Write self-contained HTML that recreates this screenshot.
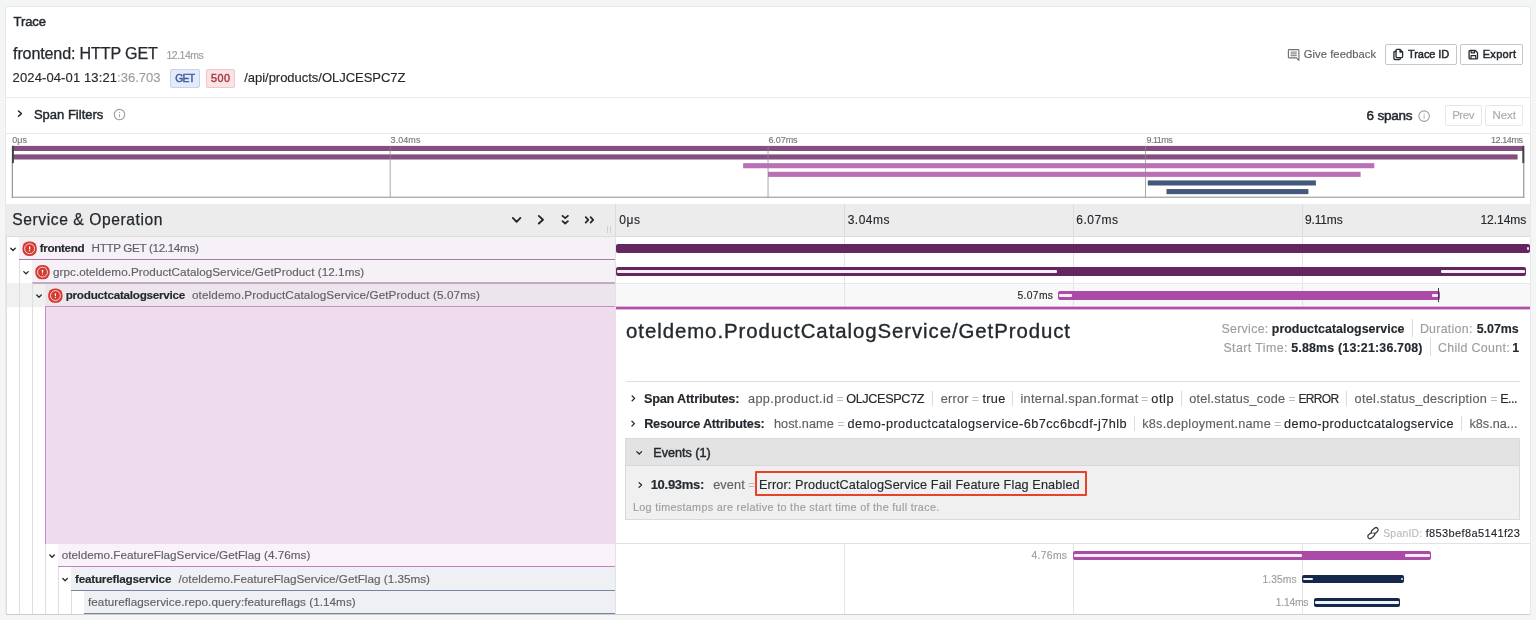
<!DOCTYPE html>
<html lang="en"><head><meta charset="utf-8"><title>Trace</title>
<style>
html,body{margin:0;padding:0;}
body{width:1536px;height:620px;overflow:hidden;background:#f4f5f5;position:relative;font-family:"Liberation Sans",Arial,sans-serif;color:#24292e;}
.a{position:absolute;display:block;}
.t{-webkit-text-stroke:0.15px currentColor;position:absolute;display:block;white-space:nowrap;line-height:1;font-family:"Liberation Sans",Arial,sans-serif;}
#panel{left:5px;top:6px;width:1524px;height:607px;background:#fff;border:1px solid #e7e8e9;border-radius:2px;}
.hl{background:#e9eaeb;height:1px;}
.vl{background:#e4e4e4;width:1px;}
.guide{background:#dedede;width:1px;}
.btn{border:1px solid #c4c6c8;border-radius:2px;background:#fff;box-sizing:border-box;}
.btn.dis{border-color:#e6e7e8;}
.badge{box-sizing:border-box;border-radius:2px;}
.bar{border-radius:2px;}
.hol{border-radius:1px;}
svg{position:absolute;display:block;overflow:visible;}
#texts{will-change:transform;}

</style></head>
<body>
<div class="a" id="panel"></div>

<!-- header dividers -->
<div class="a hl" style="left:6px;top:97px;width:1524px;"></div>
<div class="a hl" style="left:6px;top:133px;width:1524px;"></div>

<!-- method / status badges -->
<div class="a badge" style="left:170px;top:69px;width:30px;height:19px;background:#e3eaf8;border:1px solid #c3d3f2;"></div>
<div class="a badge" style="left:206px;top:69px;width:28.5px;height:19px;background:#f9e3e5;border:1px solid #f3c4c8;"></div>

<!-- header buttons -->
<div class="a btn" style="left:1385px;top:44px;width:72px;height:21px;"></div>
<div class="a btn" style="left:1460px;top:44px;width:63px;height:21px;"></div>
<div class="a btn dis" style="left:1445px;top:105px;width:37px;height:21px;"></div>
<div class="a btn dis" style="left:1485px;top:105px;width:38px;height:21px;"></div>

<!-- minimap -->
<div id="minimap">
<svg class="a" style="left:0;top:130px;" width="1536" height="72" viewBox="0 130 1536 72">
<rect x="12.3" y="145.9" width="1511.5" height="5.1" fill="#844e7e"/>
<rect x="12.3" y="154.4" width="1505.3" height="5.1" fill="#844e7e"/>
<rect x="743.1" y="163.15" width="631.2" height="5.1" fill="#bb6fb7"/>
<rect x="768.0" y="171.8" width="592.6" height="5.1" fill="#bb6fb7"/>
<rect x="1147.8" y="180.4" width="168.1" height="5.1" fill="#43597b"/>
<rect x="1166.5" y="189.05" width="141.9" height="5.1" fill="#43597b"/>
<rect x="389.70" y="145.9" width="1" height="51.3" fill="#8c8c8c" fill-opacity="0.75"/>
<rect x="767.55" y="145.9" width="1" height="51.3" fill="#8c8c8c" fill-opacity="0.75"/>
<rect x="1145.00" y="145.9" width="1" height="51.3" fill="#8c8c8c" fill-opacity="0.75"/>
<rect x="11.8" y="145.9" width="1" height="51.8" fill="#808080"/>
<rect x="1523.3" y="145.9" width="1" height="51.8" fill="#808080"/>
<rect x="11.8" y="196.7" width="1512.5" height="1" fill="#8e8e8e"/>
<rect x="12.0" y="145.9" width="1.9" height="17.2" fill="#444"/>
<rect x="1522.3" y="145.9" width="1.9" height="17.2" fill="#444"/>
</svg>
</div>

<!-- timeline header -->
<div class="a" style="left:6px;top:204px;width:1524px;height:33px;background:#ececec;"></div>
<div class="a" style="left:6px;top:236px;width:1524px;height:1px;background:#dddddd;"></div>
<div class="a" style="left:615px;top:204px;width:1px;height:33px;background:#dcdcdc;"></div>
<div class="a" style="left:844px;top:204px;width:1px;height:33px;background:#dcdcdc;"></div>
<div class="a" style="left:1073px;top:204px;width:1px;height:33px;background:#dcdcdc;"></div>
<div class="a" style="left:1302px;top:204px;width:1px;height:33px;background:#dcdcdc;"></div>
<div class="a" style="left:607px;top:225.5px;width:1px;height:7.5px;background:#d0d0d0;"></div>
<div class="a" style="left:610px;top:225.5px;width:1px;height:7.5px;background:#d0d0d0;"></div>

<!-- row backgrounds: timeline side -->
<div class="a" style="left:6px;top:283px;width:1524px;height:24px;background:#f0f0f0;"></div>
<div class="a" style="left:616px;top:283px;width:914px;height:24px;background:#f8f8f8;"></div>
<div class="a" style="left:616px;top:283px;width:914px;height:1px;background:#e8e8e8;"></div>
<!-- tick lines through rows -->
<div class="a vl" style="left:844px;top:237px;width:1px;height:70px;"></div>
<div class="a vl" style="left:1073px;top:237px;width:1px;height:70px;"></div>
<div class="a vl" style="left:1302px;top:237px;width:1px;height:70px;"></div>
<div class="a vl" style="left:844px;top:544px;width:1px;height:70px;"></div>
<div class="a vl" style="left:1073px;top:544px;width:1px;height:70px;"></div>
<div class="a vl" style="left:1302px;top:544px;width:1px;height:70px;"></div>

<!-- name column rows -->
<div class="a" style="left:19px;top:237px;width:596px;height:22px;background:#f6f1f6;border-bottom:1px solid #a57da2;"></div>
<div class="a" style="left:32px;top:260px;width:583px;height:23px;background:#f6f1f6;"></div>
<div class="a" style="left:45px;top:283px;width:570px;height:23px;background:#ece6ec;border-bottom:1px solid #c88cc5;"></div>
<div class="a" style="left:32px;top:282px;width:583px;height:2px;background:rgba(160,112,157,0.55);"></div>
<div class="a" style="left:45px;top:307px;width:569px;height:237px;background:#eedcee;border-left:1px solid #c88cc5;"></div>
<div class="a" style="left:58px;top:544px;width:557px;height:22px;background:#faf2f9;border-bottom:1px solid #c57fc2;"></div>
<div class="a" style="left:71px;top:567px;width:544px;height:23px;background:#eef0f3;border-bottom:1px solid #7385a1;"></div>
<div class="a" style="left:84px;top:591px;width:531px;height:22px;background:#eef0f3;border-bottom:1px solid #7385a1;"></div>

<!-- indent guides -->
<div class="a" style="left:615px;top:237px;width:1px;height:377px;background:#e3e3e3;"></div>
<div class="a" style="left:6px;top:237px;width:1px;height:377px;background:#dedede;"></div>
<div class="a guide" style="left:19px;top:260px;height:354px;"></div>
<div class="a guide" style="left:32px;top:283px;height:331px;"></div>
<div class="a guide" style="left:45px;top:544px;height:70px;"></div>
<div class="a guide" style="left:58px;top:567px;height:47px;"></div>
<div class="a guide" style="left:71px;top:591px;height:23px;"></div>

<!-- detail pane -->
<div class="a" style="left:616px;top:307px;width:914px;height:237px;background:#fff;"></div>
<div class="a" style="left:616px;top:306px;width:914px;height:1px;background:rgba(176,79,171,0.35);"></div>
<div class="a" style="left:616px;top:307px;width:914px;height:2px;background:#b04fab;"></div>
<div class="a" style="left:616px;top:309px;width:914px;height:1px;background:rgba(176,79,171,0.4);"></div>
<div class="a" style="left:616px;top:543px;width:914px;height:1px;background:#e2e2e2;"></div>
<div class="a" style="left:626px;top:381px;width:894px;height:1px;background:#dedede;"></div>
<!-- attr separators -->
<div class="a" style="left:1412px;top:319px;width:1px;height:18px;background:#dcdcdc;"></div>
<div class="a" style="left:1430px;top:338px;width:1px;height:18px;background:#dcdcdc;"></div>
<div class="a" style="left:932px;top:391px;width:1px;height:15px;background:#dcdcdc;"></div>
<div class="a" style="left:1012px;top:391px;width:1px;height:15px;background:#dcdcdc;"></div>
<div class="a" style="left:1181px;top:391px;width:1px;height:15px;background:#dcdcdc;"></div>
<div class="a" style="left:1346px;top:391px;width:1px;height:15px;background:#dcdcdc;"></div>
<div class="a" style="left:1134px;top:416px;width:1px;height:15px;background:#dcdcdc;"></div>
<div class="a" style="left:1461px;top:416px;width:1px;height:15px;background:#dcdcdc;"></div>
<!-- events box -->
<div class="a" style="left:625px;top:438px;width:895px;height:82px;background:#f0f0f0;border:1px solid #dadada;box-sizing:border-box;"></div>
<div class="a" style="left:626px;top:439px;width:893px;height:26.5px;background:#e3e3e3;"></div>
<div class="a" style="left:626px;top:465px;width:893px;height:1px;background:#d8d8d8;"></div>
<div class="a" style="left:755px;top:471px;width:332px;height:25px;border:2px solid #e8432a;box-sizing:border-box;border-radius:1px;"></div>

<!-- span bars -->
<div id="bars">
<div class="a bar" style="left:616px;top:244px;width:914px;height:8.7px;background:#64265e;"></div>
<div class="a hol" style="left:1526.8px;top:247px;width:2.4px;height:2.8px;background:#f4ecf3;"></div>

<div class="a bar" style="left:616px;top:267.4px;width:910.4px;height:8.6px;background:#64265e;"></div>
<div class="a hol" style="left:617px;top:270.4px;width:440.3px;height:2.8px;background:#f6eff5;"></div>
<div class="a hol" style="left:1440.5px;top:270.4px;width:84.8px;height:2.8px;background:#f6eff5;"></div>

<div class="a bar" style="left:1058px;top:291px;width:381.6px;height:8.6px;background:#ac4ba7;"></div>
<div class="a hol" style="left:1059.2px;top:293.9px;width:13px;height:2.8px;background:#f6ebf5;"></div>
<div class="a hol" style="left:1431.6px;top:293.9px;width:6.6px;height:2.8px;background:#f6ebf5;"></div>
<div class="a" style="left:1438.4px;top:288.2px;width:1px;height:13.7px;background:#3c3c3c;"></div>

<div class="a bar" style="left:1072.8px;top:551.1px;width:358.4px;height:8.7px;background:#ac4ba7;"></div>
<div class="a hol" style="left:1074px;top:554px;width:227.8px;height:2.8px;background:#f6ebf5;"></div>
<div class="a hol" style="left:1404.6px;top:554px;width:25.6px;height:2.8px;background:#f6ebf5;"></div>

<div class="a bar" style="left:1301.8px;top:574.6px;width:102.4px;height:8.8px;background:#14284b;"></div>
<div class="a hol" style="left:1303px;top:577.6px;width:10px;height:2.8px;background:#f0f2f6;"></div>
<div class="a hol" style="left:1400.6px;top:577.6px;width:2.4px;height:2.8px;background:#f0f2f6;"></div>

<div class="a bar" style="left:1313.7px;top:598.1px;width:86.2px;height:8.6px;background:#14284b;"></div>
<div class="a hol" style="left:1315px;top:601px;width:83.6px;height:2.8px;background:#f0f2f6;"></div>
</div>

<div class="a" style="left:6px;top:614px;width:1524px;height:1px;background:#cccccc;"></div>
<div id="icons"><svg class="a" style="left:0;top:0;" width="1536" height="620" viewBox="0 0 1536 620">
<path d="M10.75,248.30 L13.00,250.50 L15.25,248.30" fill="none" stroke="#24292e" stroke-width="1.3" stroke-linecap="round" stroke-linejoin="round"/>
<path d="M23.75,271.60 L26.00,273.80 L28.25,271.60" fill="none" stroke="#24292e" stroke-width="1.3" stroke-linecap="round" stroke-linejoin="round"/>
<path d="M36.75,295.00 L39.00,297.20 L41.25,295.00" fill="none" stroke="#24292e" stroke-width="1.3" stroke-linecap="round" stroke-linejoin="round"/>
<path d="M49.85,555.00 L52.10,557.20 L54.35,555.00" fill="none" stroke="#24292e" stroke-width="1.3" stroke-linecap="round" stroke-linejoin="round"/>
<path d="M62.85,578.50 L65.10,580.70 L67.35,578.50" fill="none" stroke="#24292e" stroke-width="1.3" stroke-linecap="round" stroke-linejoin="round"/>
<g transform="translate(29.6,248.7)"><rect x="-7.2" y="-7.2" width="14.4" height="14.4" rx="6.4" fill="#d23a33"/><circle r="4.95" fill="none" stroke="#fff" stroke-width="0.9" opacity="0.88"/><rect x="-0.6" y="-2.4" width="1.2" height="3.1" rx="0.5" fill="#fff"/><circle cy="1.95" r="0.65" fill="#fff"/></g>
<g transform="translate(42.5,272.1)"><rect x="-7.2" y="-7.2" width="14.4" height="14.4" rx="6.4" fill="#d23a33"/><circle r="4.95" fill="none" stroke="#fff" stroke-width="0.9" opacity="0.88"/><rect x="-0.6" y="-2.4" width="1.2" height="3.1" rx="0.5" fill="#fff"/><circle cy="1.95" r="0.65" fill="#fff"/></g>
<g transform="translate(55.4,295.6)"><rect x="-7.2" y="-7.2" width="14.4" height="14.4" rx="6.4" fill="#d23a33"/><circle r="4.95" fill="none" stroke="#fff" stroke-width="0.9" opacity="0.88"/><rect x="-0.6" y="-2.4" width="1.2" height="3.1" rx="0.5" fill="#fff"/><circle cy="1.95" r="0.65" fill="#fff"/></g>
<path d="M512.80,217.90 L516.60,221.90 L520.40,217.90" fill="none" stroke="#24292e" stroke-width="1.9" stroke-linecap="round" stroke-linejoin="round"/>
<path d="M538.80,215.90 L543.00,219.70 L538.80,223.50" fill="none" stroke="#24292e" stroke-width="1.9" stroke-linecap="round" stroke-linejoin="round"/>
<path d="M562.50,215.80 L565.20,218.20 L567.90,215.80" fill="none" stroke="#24292e" stroke-width="1.8" stroke-linecap="round" stroke-linejoin="round"/>
<path d="M562.50,221.10 L565.20,223.50 L567.90,221.10" fill="none" stroke="#24292e" stroke-width="1.8" stroke-linecap="round" stroke-linejoin="round"/>
<path d="M585.70,217.15 L588.30,219.85 L585.70,222.55" fill="none" stroke="#24292e" stroke-width="1.8" stroke-linecap="round" stroke-linejoin="round"/>
<path d="M590.60,217.15 L593.20,219.85 L590.60,222.55" fill="none" stroke="#24292e" stroke-width="1.8" stroke-linecap="round" stroke-linejoin="round"/>
<path d="M18.50,111.00 L21.40,113.60 L18.50,116.20" fill="none" stroke="#24292e" stroke-width="1.5" stroke-linecap="round" stroke-linejoin="round"/>
<g transform="translate(119.5,114.6)"><circle r="5.2" fill="none" stroke="#9c9ea0" stroke-width="1.1"/><circle cy="-2.1" r="0.6" fill="#9c9ea0"/><rect x="-0.45" y="-0.8" width="0.9" height="3.5" rx="0.4" fill="#9c9ea0"/></g>
<g transform="translate(1424.1,116.1)"><circle r="5.25" fill="none" stroke="#9c9ea0" stroke-width="1.1"/><circle cy="-2.1" r="0.6" fill="#9c9ea0"/><rect x="-0.45" y="-0.8" width="0.9" height="3.5" rx="0.4" fill="#9c9ea0"/></g>
<path d="M632.15,396.00 L634.65,398.40 L632.15,400.80" fill="none" stroke="#24292e" stroke-width="1.3" stroke-linecap="round" stroke-linejoin="round"/>
<path d="M631.95,421.20 L634.45,423.60 L631.95,426.00" fill="none" stroke="#24292e" stroke-width="1.3" stroke-linecap="round" stroke-linejoin="round"/>
<path d="M636.80,451.60 L639.20,454.00 L641.60,451.60" fill="none" stroke="#24292e" stroke-width="1.3" stroke-linecap="round" stroke-linejoin="round"/>
<path d="M639.05,482.60 L641.55,485.00 L639.05,487.40" fill="none" stroke="#24292e" stroke-width="1.3" stroke-linecap="round" stroke-linejoin="round"/>
<path d="M1288.4,50.5 a0.9,0.9 0 0 1 0.9,-0.9 h8.7 a0.9,0.9 0 0 1 0.9,0.9 v9.8 l-2.4,-2.4 h-7.2 a0.9,0.9 0 0 1 -0.9,-0.9 z" fill="none" stroke="#6c6f73" stroke-width="1.15" stroke-linejoin="round"/><path d="M1290.6,52.1 h6.2 M1290.6,53.9 h6.2 M1290.6,55.7 h6.2" fill="none" stroke="#6c6f73" stroke-width="0.95"/>
<path d="M1396.0,50.4 a1,1 0 0 1 1,-1 h3.0 l2.6,2.6 v4.6 a1,1 0 0 1 -1,1 h-4.6 a1,1 0 0 1 -1,-1 z M1400.0,49.4 v2.6 h2.6" fill="none" stroke="#24292e" stroke-width="1.3" stroke-linejoin="round"/><path d="M1396.0,51.5 h-1.1 a1,1 0 0 0 -1,1 v6.0 a1,1 0 0 0 1,1 h4.4 a1,1 0 0 0 1,-1 v-0.9" fill="none" stroke="#24292e" stroke-width="1.3" stroke-linejoin="round" stroke-linecap="round"/>
<path d="M1469.1,51.5 a1,1 0 0 1 1,-1 h5.2 l2.2,2.2 v5.2 a1,1 0 0 1 -1,1 h-6.4 a1,1 0 0 1 -1,-1 z" fill="none" stroke="#24292e" stroke-width="1.3" stroke-linejoin="round"/><path d="M1471.2,50.6 v2.3 h3.3 v-2.3 M1471.0,58.8 v-3.2 h4.7 v3.2" fill="none" stroke="#24292e" stroke-width="1.15" stroke-linejoin="round"/>
<g transform="translate(1373,533.15) rotate(-41)" fill="none" stroke="#3a3f44" stroke-width="1.3" stroke-linecap="round"><path d="M-1.5,-1.65 H-4.4 A2.2,2.2 0 0 0 -4.4,2.75 H-1.3 A2.2,2.2 0 0 0 0.9,0.55"/><path d="M1.5,1.65 H4.4 A2.2,2.2 0 0 0 4.4,-2.75 H1.3 A2.2,2.2 0 0 0 -0.9,-0.55"/></g>
</svg></div>

<div id="texts">
<span class="t" id="t0" style="left:13.50px;top:15.00px;font-size:13px;color:#24292e;letter-spacing:-0.062px;-webkit-text-stroke:0.45px currentColor;">Trace</span>
<span class="t" id="t1" style="left:13.10px;top:45.00px;font-size:16.1px;color:#24292e;letter-spacing:-0.152px;-webkit-text-stroke:0.25px currentColor;">frontend: HTTP GET</span>
<span class="t" id="t2" style="left:166.50px;top:50.00px;font-size:10.5px;color:#9b9da0;letter-spacing:-0.514px;">12.14ms</span>
<span class="t" id="t3" style="left:12.60px;top:71.00px;font-size:13px;color:#24292e;letter-spacing:0.116px;">2024-04-01 13:21</span>
<span class="t" id="t4" style="left:117.00px;top:71.00px;font-size:13px;color:#9b9da0;letter-spacing:0.021px;">:36.703</span>
<span class="t" id="t5" style="left:175.20px;top:74.00px;font-size:10.4px;color:#3d5c9e;letter-spacing:-0.688px;-webkit-text-stroke:0.45px currentColor;">GET</span>
<span class="t" id="t6" style="left:210.90px;top:73.00px;font-size:10.8px;color:#a83a42;letter-spacing:0.542px;-webkit-text-stroke:0.45px currentColor;">500</span>
<span class="t" id="t7" style="left:244.20px;top:71.00px;font-size:13px;color:#24292e;letter-spacing:-0.024px;">/api/products/OLJCESPC7Z</span>
<span class="t" id="t8" style="left:1303.80px;top:49.00px;font-size:11.2px;color:#5e6165;letter-spacing:0.056px;">Give feedback</span>
<span class="t" id="t9" style="left:1408.00px;top:49.00px;font-size:11px;color:#24292e;letter-spacing:-0.067px;-webkit-text-stroke:0.45px currentColor;">Trace ID</span>
<span class="t" id="t10" style="left:1482.70px;top:49.00px;font-size:11px;color:#24292e;letter-spacing:0.301px;-webkit-text-stroke:0.45px currentColor;">Export</span>
<span class="t" id="t11" style="left:33.90px;top:108.00px;font-size:13px;color:#24292e;letter-spacing:0.011px;-webkit-text-stroke:0.45px currentColor;">Span Filters</span>
<span class="t" id="t12" style="left:1366.60px;top:109.00px;font-size:13.5px;color:#24292e;letter-spacing:-0.233px;-webkit-text-stroke:0.5px currentColor;">6 spans</span>
<span class="t" id="t13" style="left:1452.20px;top:110.00px;font-size:11.5px;color:#a9abad;letter-spacing:-0.485px;">Prev</span>
<span class="t" id="t14" style="left:1492.50px;top:110.00px;font-size:11.5px;color:#a9abad;letter-spacing:-0.052px;">Next</span>
<span class="t" id="t15" style="left:12.30px;top:136.00px;font-size:9px;color:#76787b;letter-spacing:0.048px;">0μs</span>
<span class="t" id="t16" style="left:390.60px;top:136.00px;font-size:9px;color:#76787b;letter-spacing:0.057px;">3.04ms</span>
<span class="t" id="t17" style="left:768.40px;top:136.00px;font-size:9px;color:#76787b;letter-spacing:-0.063px;">6.07ms</span>
<span class="t" id="t18" style="left:1146.50px;top:136.00px;font-size:9px;color:#76787b;letter-spacing:-0.512px;">9.11ms</span>
<span class="t" id="t19" style="left:1491.00px;top:136.00px;font-size:9px;color:#76787b;letter-spacing:-0.422px;">12.14ms</span>
<span class="t" id="t20" style="left:12.30px;top:212.00px;font-size:15.6px;color:#24292e;letter-spacing:0.592px;-webkit-text-stroke:0.25px currentColor;">Service &amp; Operation</span>
<span class="t" id="t21" style="left:619.30px;top:214.00px;font-size:12px;color:#24292e;letter-spacing:0.553px;">0μs</span>
<span class="t" id="t22" style="left:847.70px;top:214.00px;font-size:12px;color:#24292e;letter-spacing:0.488px;">3.04ms</span>
<span class="t" id="t23" style="left:1076.30px;top:214.00px;font-size:12px;color:#24292e;letter-spacing:0.468px;">6.07ms</span>
<span class="t" id="t24" style="left:1305.00px;top:214.00px;font-size:12px;color:#24292e;letter-spacing:-0.154px;">9.11ms</span>
<span class="t" id="t25" style="left:1480.40px;top:214.00px;font-size:12px;color:#24292e;letter-spacing:-0.022px;">12.14ms</span>
<span class="t" id="t26" style="left:39.80px;top:242.00px;font-size:11.7px;color:#24292e;font-weight:700;letter-spacing:-0.370px;">frontend</span>
<span class="t" id="t27" style="left:91.60px;top:242.00px;font-size:11.7px;color:#5e6165;letter-spacing:-0.355px;">HTTP GET (12.14ms)</span>
<span class="t" id="t28" style="left:53.00px;top:266.00px;font-size:11.7px;color:#5e6165;letter-spacing:0.049px;">grpc.oteldemo.ProductCatalogService/GetProduct (12.1ms)</span>
<span class="t" id="t29" style="left:65.70px;top:289.00px;font-size:11.7px;color:#24292e;font-weight:700;letter-spacing:-0.256px;">productcatalogservice</span>
<span class="t" id="t30" style="left:192.00px;top:289.00px;font-size:11.7px;color:#5e6165;letter-spacing:0.108px;">oteldemo.ProductCatalogService/GetProduct (5.07ms)</span>
<span class="t" id="t31" style="left:61.70px;top:549.00px;font-size:11.7px;color:#5e6165;letter-spacing:0.028px;">oteldemo.FeatureFlagService/GetFlag (4.76ms)</span>
<span class="t" id="t32" style="left:75.00px;top:573.00px;font-size:11.7px;color:#24292e;font-weight:700;letter-spacing:-0.215px;">featureflagservice</span>
<span class="t" id="t33" style="left:178.60px;top:573.00px;font-size:11.7px;color:#5e6165;letter-spacing:0.015px;">/oteldemo.FeatureFlagService/GetFlag (1.35ms)</span>
<span class="t" id="t34" style="left:88.00px;top:596.00px;font-size:11.7px;color:#5e6165;letter-spacing:0.053px;">featureflagservice.repo.query:featureflags (1.14ms)</span>
<span class="t" id="t35" style="left:1017.50px;top:291.00px;font-size:10.3px;color:#24292e;letter-spacing:0.344px;">5.07ms</span>
<span class="t" id="t36" style="left:1031.40px;top:551.00px;font-size:10.3px;color:#9b9da0;letter-spacing:0.364px;">4.76ms</span>
<span class="t" id="t37" style="left:1262.40px;top:575.00px;font-size:10.3px;color:#9b9da0;letter-spacing:0.084px;">1.35ms</span>
<span class="t" id="t38" style="left:1275.70px;top:598.00px;font-size:10.3px;color:#9b9da0;letter-spacing:-0.196px;">1.14ms</span>
<span class="t" id="t39" style="left:626.10px;top:321.00px;font-size:20.4px;color:#24292e;letter-spacing:0.925px;-webkit-text-stroke:0.35px currentColor;">oteldemo.ProductCatalogService/GetProduct</span>
<span class="t" id="t40" style="left:1221.40px;top:323.00px;font-size:12.4px;color:#9b9da0;letter-spacing:0.305px;">Service:</span>
<span class="t" id="t41" style="left:1271.80px;top:323.00px;font-size:12.4px;color:#24292e;font-weight:700;letter-spacing:0.024px;">productcatalogservice</span>
<span class="t" id="t42" style="left:1419.90px;top:323.00px;font-size:12.4px;color:#9b9da0;letter-spacing:0.277px;">Duration:</span>
<span class="t" id="t43" style="left:1476.70px;top:323.00px;font-size:12.4px;color:#24292e;font-weight:700;letter-spacing:-0.006px;">5.07ms</span>
<span class="t" id="t44" style="left:1223.40px;top:342.00px;font-size:12.4px;color:#9b9da0;letter-spacing:0.419px;">Start Time:</span>
<span class="t" id="t45" style="left:1291.20px;top:342.00px;font-size:12.4px;color:#24292e;font-weight:700;letter-spacing:0.193px;">5.88ms (13:21:36.708)</span>
<span class="t" id="t46" style="left:1438.00px;top:342.00px;font-size:12.4px;color:#9b9da0;letter-spacing:0.310px;">Child Count:</span>
<span class="t" id="t47" style="left:1512.20px;top:342.00px;font-size:12.4px;color:#24292e;font-weight:700;">1</span>
<span class="t" id="t48" style="left:643.90px;top:393.00px;font-size:12.7px;color:#24292e;font-weight:700;letter-spacing:-0.181px;">Span Attributes:</span>
<span class="t" id="t49" style="left:748.00px;top:393.00px;font-size:12.7px;color:#5e6165;letter-spacing:0.368px;">app.product.id</span>
<span class="t" id="t50" style="left:836.60px;top:394.00px;font-size:11.5px;color:#b9bbbd;">=</span>
<span class="t" id="t51" style="left:846.20px;top:393.00px;font-size:12.7px;color:#24292e;letter-spacing:-0.377px;">OLJCESPC7Z</span>
<span class="t" id="t52" style="left:940.70px;top:393.00px;font-size:12.7px;color:#5e6165;letter-spacing:0.251px;">error</span>
<span class="t" id="t53" style="left:972.00px;top:394.00px;font-size:11.5px;color:#b9bbbd;">=</span>
<span class="t" id="t54" style="left:982.40px;top:393.00px;font-size:12.7px;color:#24292e;letter-spacing:0.342px;">true</span>
<span class="t" id="t55" style="left:1020.50px;top:393.00px;font-size:12.7px;color:#5e6165;letter-spacing:0.293px;">internal.span.format</span>
<span class="t" id="t56" style="left:1141.30px;top:394.00px;font-size:11.5px;color:#b9bbbd;">=</span>
<span class="t" id="t57" style="left:1151.20px;top:393.00px;font-size:12.7px;color:#24292e;letter-spacing:0.677px;">otlp</span>
<span class="t" id="t58" style="left:1189.20px;top:393.00px;font-size:12.7px;color:#5e6165;letter-spacing:0.233px;">otel.status_code</span>
<span class="t" id="t59" style="left:1288.60px;top:394.00px;font-size:11.5px;color:#b9bbbd;">=</span>
<span class="t" id="t60" style="left:1298.50px;top:393.00px;font-size:12.0px;color:#24292e;letter-spacing:-0.686px;">ERROR</span>
<span class="t" id="t61" style="left:1354.60px;top:393.00px;font-size:12.7px;color:#5e6165;letter-spacing:0.270px;">otel.status_description</span>
<span class="t" id="t62" style="left:1490.40px;top:394.00px;font-size:11.5px;color:#b9bbbd;">=</span>
<span class="t" id="t63" style="left:1500.20px;top:393.00px;font-size:12.7px;color:#24292e;letter-spacing:-0.582px;">E...</span>
<span class="t" id="t64" style="left:644.20px;top:418.00px;font-size:12.7px;color:#24292e;font-weight:700;letter-spacing:-0.238px;">Resource Attributes:</span>
<span class="t" id="t65" style="left:773.90px;top:418.00px;font-size:12.7px;color:#5e6165;letter-spacing:0.081px;">host.name</span>
<span class="t" id="t66" style="left:837.60px;top:419.00px;font-size:11.5px;color:#b9bbbd;">=</span>
<span class="t" id="t67" style="left:847.60px;top:418.00px;font-size:12.7px;color:#24292e;letter-spacing:0.464px;">demo-productcatalogservice-6b7cc6bcdf-j7hlb</span>
<span class="t" id="t68" style="left:1142.20px;top:418.00px;font-size:12.7px;color:#5e6165;letter-spacing:0.243px;">k8s.deployment.name</span>
<span class="t" id="t69" style="left:1274.20px;top:419.00px;font-size:11.5px;color:#b9bbbd;">=</span>
<span class="t" id="t70" style="left:1284.00px;top:418.00px;font-size:12.7px;color:#24292e;letter-spacing:0.404px;">demo-productcatalogservice</span>
<span class="t" id="t71" style="left:1469.40px;top:418.00px;font-size:12.7px;color:#5e6165;letter-spacing:0.016px;">k8s.na...</span>
<span class="t" id="t72" style="left:653.30px;top:447.00px;font-size:12.6px;color:#24292e;letter-spacing:-0.012px;-webkit-text-stroke:0.45px currentColor;">Events (1)</span>
<span class="t" id="t73" style="left:650.70px;top:478.00px;font-size:13px;color:#24292e;font-weight:700;letter-spacing:-0.294px;">10.93ms:</span>
<span class="t" id="t74" style="left:713.20px;top:479.00px;font-size:12.7px;color:#5e6165;letter-spacing:0.113px;">event</span>
<span class="t" id="t75" style="left:748.30px;top:480.00px;font-size:11px;color:#b9bbbd;">=</span>
<span class="t" id="t76" style="left:759.00px;top:479.00px;font-size:12.7px;color:#24292e;letter-spacing:0.115px;">Error: ProductCatalogService Fail Feature Flag Enabled</span>
<span class="t" id="t77" style="left:632.90px;top:502.00px;font-size:10.8px;color:#9b9da0;letter-spacing:0.309px;">Log timestamps are relative to the start time of the full trace.</span>
<span class="t" id="t78" style="left:1383.20px;top:529.00px;font-size:10.4px;color:#b9bbbd;letter-spacing:0.242px;">SpanID:</span>
<span class="t" id="t79" style="left:1425.70px;top:528.00px;font-size:11px;color:#24292e;letter-spacing:0.373px;">f853bef8a5141f23</span>
</div>
</body></html>
